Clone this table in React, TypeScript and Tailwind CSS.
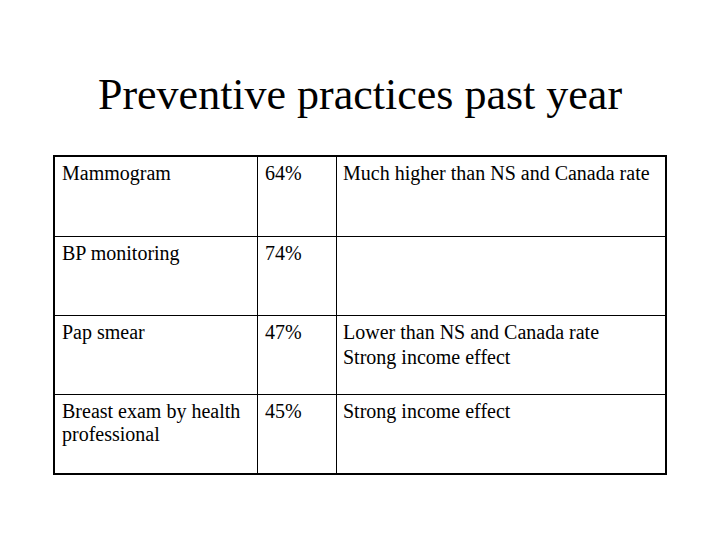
import React from "react";

const rows: { a: React.ReactNode; b: string; c: React.ReactNode }[] = [
  { a: "Mammogram", b: "64%", c: "Much higher than NS and Canada rate" },
  { a: "BP monitoring", b: "74%", c: "" },
  {
    a: "Pap smear",
    b: "47%",
    c: (
      <>
        <div>Lower than NS and Canada rate</div>
        <div className="mt-[2px]">Strong income effect</div>
      </>
    ),
  },
  {
    a: (
      <>
        Breast exam by health
        <br />
        professional
      </>
    ),
    b: "45%",
    c: "Strong income effect",
  },
];

export default function App() {
  return (
    <div
      className="w-[720px] h-[540px] bg-white text-black overflow-hidden"
      style={{ fontFamily: '"Liberation Serif", "Times New Roman", serif' }}
    >
      <div className="pt-[73px] h-[155px] text-center text-[44px] leading-[44px]">
        Preventive practices past year
      </div>
      <div className="ml-[53px] w-[614px] border-2 border-black">
        {rows.map((r, i) => (
          <div
            key={i}
            className={`grid grid-cols-[203px_79px_1fr] h-[79px] ${i > 0 ? "border-t border-black" : ""}`}
          >
            <div className="border-r border-black pl-[7px] pt-[5px] text-[20px] leading-[23px]">
              {r.a}
            </div>
            <div className="border-r border-black pl-[7px] pt-[5px] text-[20px] leading-[23px]">
              {r.b}
            </div>
            <div className="pl-[6px] pt-[5px] text-[20px] leading-[23px]">{r.c}</div>
          </div>
        ))}
      </div>
    </div>
  );
}
